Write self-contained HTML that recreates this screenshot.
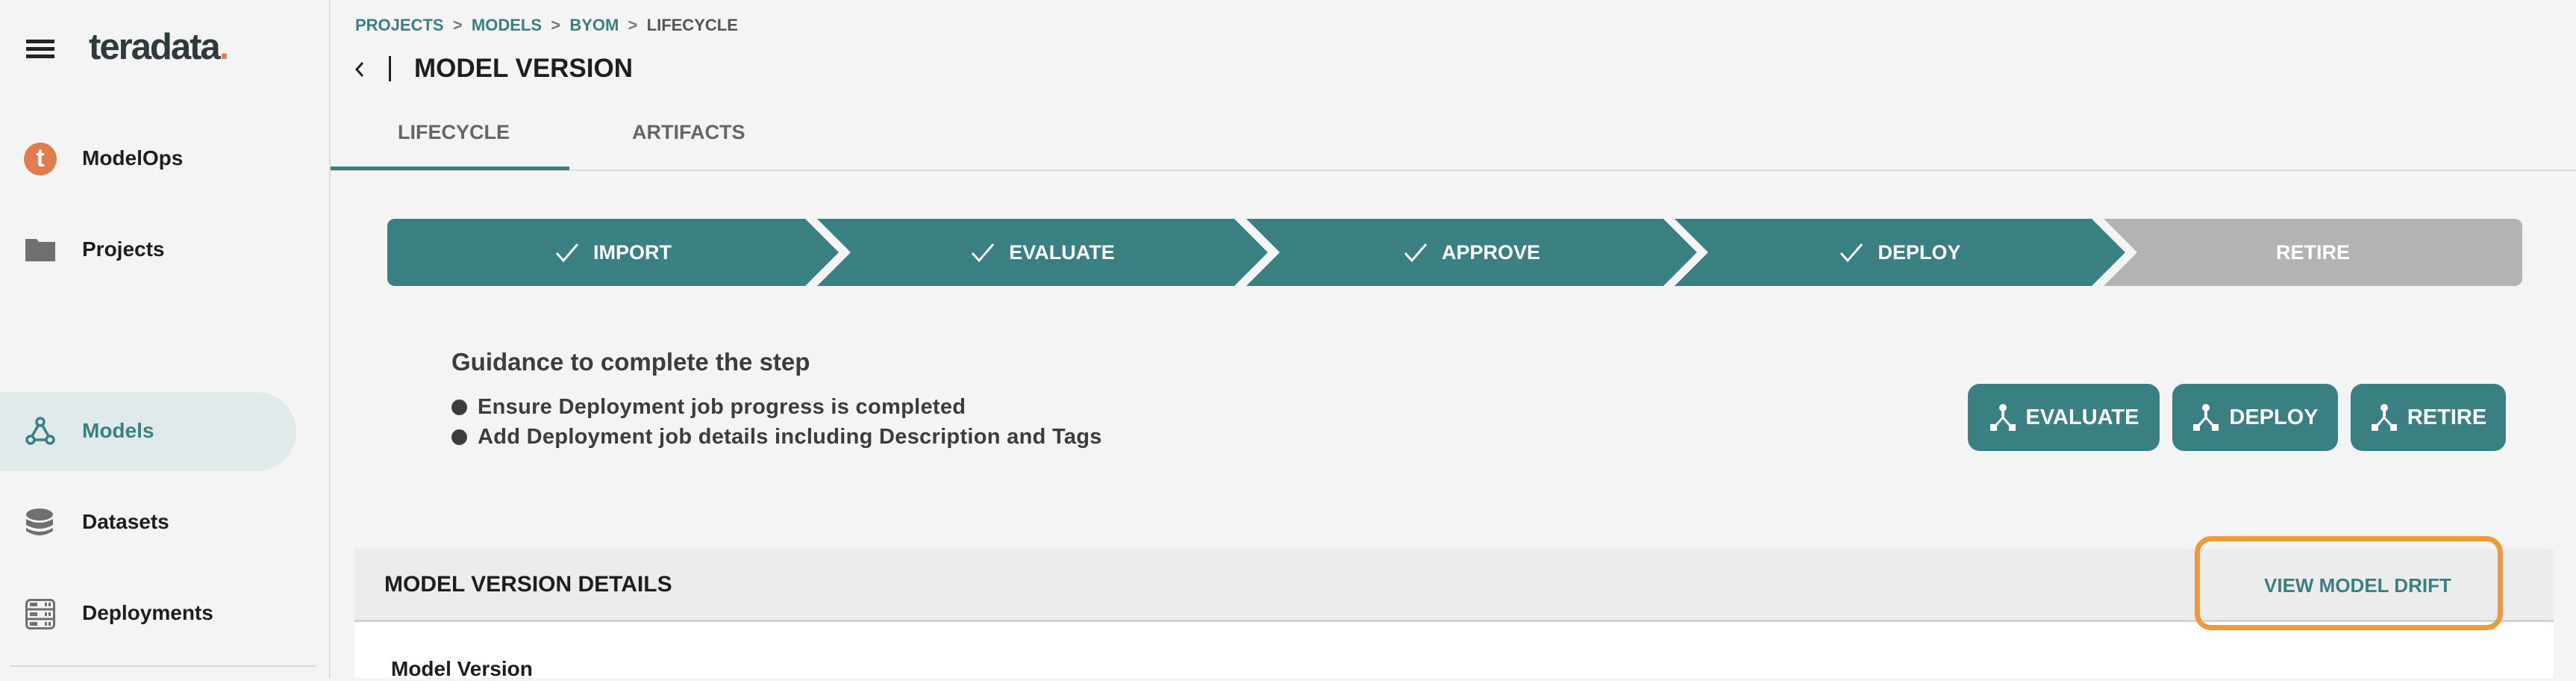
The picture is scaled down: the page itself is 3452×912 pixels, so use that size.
<!DOCTYPE html>
<html><head><meta charset="utf-8"><style>
*{margin:0;padding:0;box-sizing:border-box}
body{width:3452px;height:908px;background:#f4f4f4;font-family:"Liberation Sans",Arial,sans-serif;position:relative;overflow:hidden}
.a{position:absolute;white-space:nowrap}
.nav{font-weight:bold;font-size:28px;color:#1e1e1e;left:110px}
.step{position:absolute;top:293px;height:90px;background:#3a8082;color:#fff;font-weight:bold;font-size:27px;display:flex;align-items:center;justify-content:center}
.step svg{margin-right:18px}
.btn{position:absolute;top:514px;height:90px;background:#3a8082;border-radius:16px;color:#fff;font-weight:bold;font-size:29px;display:flex;align-items:center;justify-content:center}
.btn svg{margin-right:12px}
.bul{font-size:29px;font-weight:bold;color:#3c3c3c;left:605px;letter-spacing:0.3px}
.bul::before{content:"";display:inline-block;width:21px;height:21px;border-radius:50%;background:#3c3c3c;margin-right:14px;vertical-align:-2px}
</style></head><body>
<div class="a" style="left:0;top:0;width:443px;height:908px;background:#f4f4f4;border-right:2px solid #dcdcdc"></div>
<div class="a" style="left:35px;top:53px;width:38px;height:5px;background:#222"></div>
<div class="a" style="left:35px;top:63px;width:38px;height:5px;background:#222"></div>
<div class="a" style="left:35px;top:73px;width:38px;height:5px;background:#222"></div>
<div class="a" style="left:119px;top:35px;font-size:49px;font-weight:bold;color:#2f3a3d;letter-spacing:-2px">teradata<span style="color:#e57d4e">.</span></div>
<div class="a" style="left:32px;top:191px;width:44px;height:44px;border-radius:50%;background:#e07c4f;color:#fff;font-weight:bold;font-size:34px;text-align:center;line-height:42px">t</div>
<div class="a nav" style="top:196px">ModelOps</div>
<svg class="a" style="left:34px;top:316px" width="40" height="36"><path d="M0 4h15l3 4h22v26H0z" fill="#707070"/></svg>
<div class="a nav" style="top:318px">Projects</div>
<div class="a" style="left:0;top:525px;width:397px;height:106px;background:#e1eaea;border-radius:0 53px 53px 0"></div>
<svg class="a" style="left:33px;top:558px" width="42" height="40" viewBox="0 0 42 40" fill="none" stroke="#3a8082" stroke-width="3.5"><circle cx="21" cy="7" r="5"/><circle cx="8" cy="31" r="5"/><circle cx="34" cy="31" r="5"/><path d="M18 12 10 26M13 31h16M24 12l8 14"/></svg>
<div class="a nav" style="top:561px;color:#3a8082">Models</div>
<svg class="a" style="left:34px;top:681px" width="38" height="38" viewBox="0 0 38 38"><ellipse cx="19" cy="8" rx="18" ry="8" fill="#707070"/><path d="M1 14q18 10 36 0v8q-18 10-36 0zM1 26q18 10 36 0v4q-18 12-36 0z" fill="#707070"/></svg>
<div class="a nav" style="top:683px">Datasets</div>
<svg class="a" style="left:34px;top:802px" width="40" height="41" viewBox="0 0 40 41"><rect x="1.5" y="1.5" width="37" height="38" rx="5" fill="none" stroke="#707070" stroke-width="3"/><path d="M2 14h36M2 27h36" stroke="#707070" stroke-width="3"/><g fill="#707070"><rect x="6" y="5" width="10" height="5"/><rect x="6" y="18" width="10" height="5"/><rect x="6" y="31" width="10" height="5"/><rect x="26" y="5" width="3" height="5"/><rect x="31" y="5" width="3" height="5"/><rect x="26" y="18" width="3" height="5"/><rect x="31" y="18" width="3" height="5"/><rect x="26" y="31" width="3" height="5"/><rect x="31" y="31" width="3" height="5"/></g></svg>
<div class="a nav" style="top:805px">Deployments</div>
<div class="a" style="left:14px;top:891px;width:410px;height:2px;background:#d8d8d8"></div>

<div class="a" style="left:476px;top:21px;font-size:22px;font-weight:bold;color:#3a8082">PROJECTS <span style="color:#777">&nbsp;&gt;&nbsp;</span> MODELS <span style="color:#777">&nbsp;&gt;&nbsp;</span> BYOM <span style="color:#777">&nbsp;&gt;&nbsp;</span> <span style="color:#555">LIFECYCLE</span></div>
<svg class="a" style="left:475px;top:82px" width="14" height="22"><path d="M11 2 3 11l8 9" fill="none" stroke="#222" stroke-width="3"/></svg>
<div class="a" style="left:521px;top:75px;width:3px;height:34px;background:#222"></div>
<div class="a" style="left:555px;top:72px;font-size:35px;font-weight:bold;color:#1e1e1e">MODEL VERSION</div>
<div class="a" style="left:533px;top:162px;font-size:27px;font-weight:bold;color:#666">LIFECYCLE</div>
<div class="a" style="left:847px;top:162px;font-size:27px;font-weight:bold;color:#666">ARTIFACTS</div>
<div class="a" style="left:443px;top:227px;width:3009px;height:2px;background:#dcdcdc"></div>
<div class="a" style="left:443px;top:223px;width:320px;height:5px;background:#3a8082"></div>

<div class="step" style="left:519px;width:605px;border-radius:10px 0 0 10px;clip-path:polygon(0 0,560px 0,605px 50%,560px 100%,0 100%)"><svg width="34" height="28"><path d="M3 15l9 10L31 3" fill="none" stroke="#fff" stroke-width="3"/></svg>IMPORT</div>
<div class="step" style="left:1095px;width:604px;clip-path:polygon(0 0,559px 0,604px 50%,559px 100%,0 100%,45px 50%)"><svg width="34" height="28"><path d="M3 15l9 10L31 3" fill="none" stroke="#fff" stroke-width="3"/></svg>EVALUATE</div>
<div class="step" style="left:1670px;width:604px;clip-path:polygon(0 0,559px 0,604px 50%,559px 100%,0 100%,45px 50%)"><svg width="34" height="28"><path d="M3 15l9 10L31 3" fill="none" stroke="#fff" stroke-width="3"/></svg>APPROVE</div>
<div class="step" style="left:2244px;width:604px;clip-path:polygon(0 0,559px 0,604px 50%,559px 100%,0 100%,45px 50%)"><svg width="34" height="28"><path d="M3 15l9 10L31 3" fill="none" stroke="#fff" stroke-width="3"/></svg>DEPLOY</div>
<div class="step" style="left:2819px;width:561px;background:#b2b3b4;border-radius:0 10px 10px 0;clip-path:polygon(0 0,100% 0,100% 100%,0 100%,45px 50%)">RETIRE</div>

<div class="a" style="left:605px;top:466px;font-size:33px;font-weight:bold;color:#3c3c3c">Guidance to complete the step</div>
<div class="a bul" style="top:529px">Ensure Deployment job progress is completed</div>
<div class="a bul" style="top:569px">Add Deployment job details including Description and Tags</div>

<div class="btn" style="left:2637px;width:257px"><svg width="38" height="38" viewBox="0 0 38 38" fill="#fff"><circle cx="19" cy="6" r="5"/><rect x="17" y="9" width="4" height="10"/><path d="M19 17 7 30l3 2 9-11 9 11 3-2z"/><rect x="2" y="28" width="9" height="9"/><rect x="27" y="28" width="9" height="9"/></svg>EVALUATE</div>
<div class="btn" style="left:2911px;width:222px"><svg width="38" height="38" viewBox="0 0 38 38" fill="#fff"><circle cx="19" cy="6" r="5"/><rect x="17" y="9" width="4" height="10"/><path d="M19 17 7 30l3 2 9-11 9 11 3-2z"/><rect x="2" y="28" width="9" height="9"/><rect x="27" y="28" width="9" height="9"/></svg>DEPLOY</div>
<div class="btn" style="left:3150px;width:208px"><svg width="38" height="38" viewBox="0 0 38 38" fill="#fff"><circle cx="19" cy="6" r="5"/><rect x="17" y="9" width="4" height="10"/><path d="M19 17 7 30l3 2 9-11 9 11 3-2z"/><rect x="2" y="28" width="9" height="9"/><rect x="27" y="28" width="9" height="9"/></svg>RETIRE</div>

<div class="a" style="left:475px;top:735px;width:2947px;height:98px;background:#ececec;border-bottom:3px solid #d2d2d2"></div>
<div class="a" style="left:475px;top:833px;width:2947px;height:75px;background:#fff"></div>
<div class="a" style="left:515px;top:766px;font-size:30px;font-weight:bold;color:#1e1e1e">MODEL VERSION DETAILS</div>
<div class="a" style="left:2941px;top:718px;width:413px;height:126px;border:7px solid #f0993a;border-radius:22px"></div>
<div class="a" style="left:3034px;top:769px;font-size:26px;font-weight:bold;color:#3a8082">VIEW MODEL DRIFT</div>
<div class="a" style="left:524px;top:880px;font-size:28px;font-weight:bold;color:#1e1e1e">Model Version</div>
</body></html>
